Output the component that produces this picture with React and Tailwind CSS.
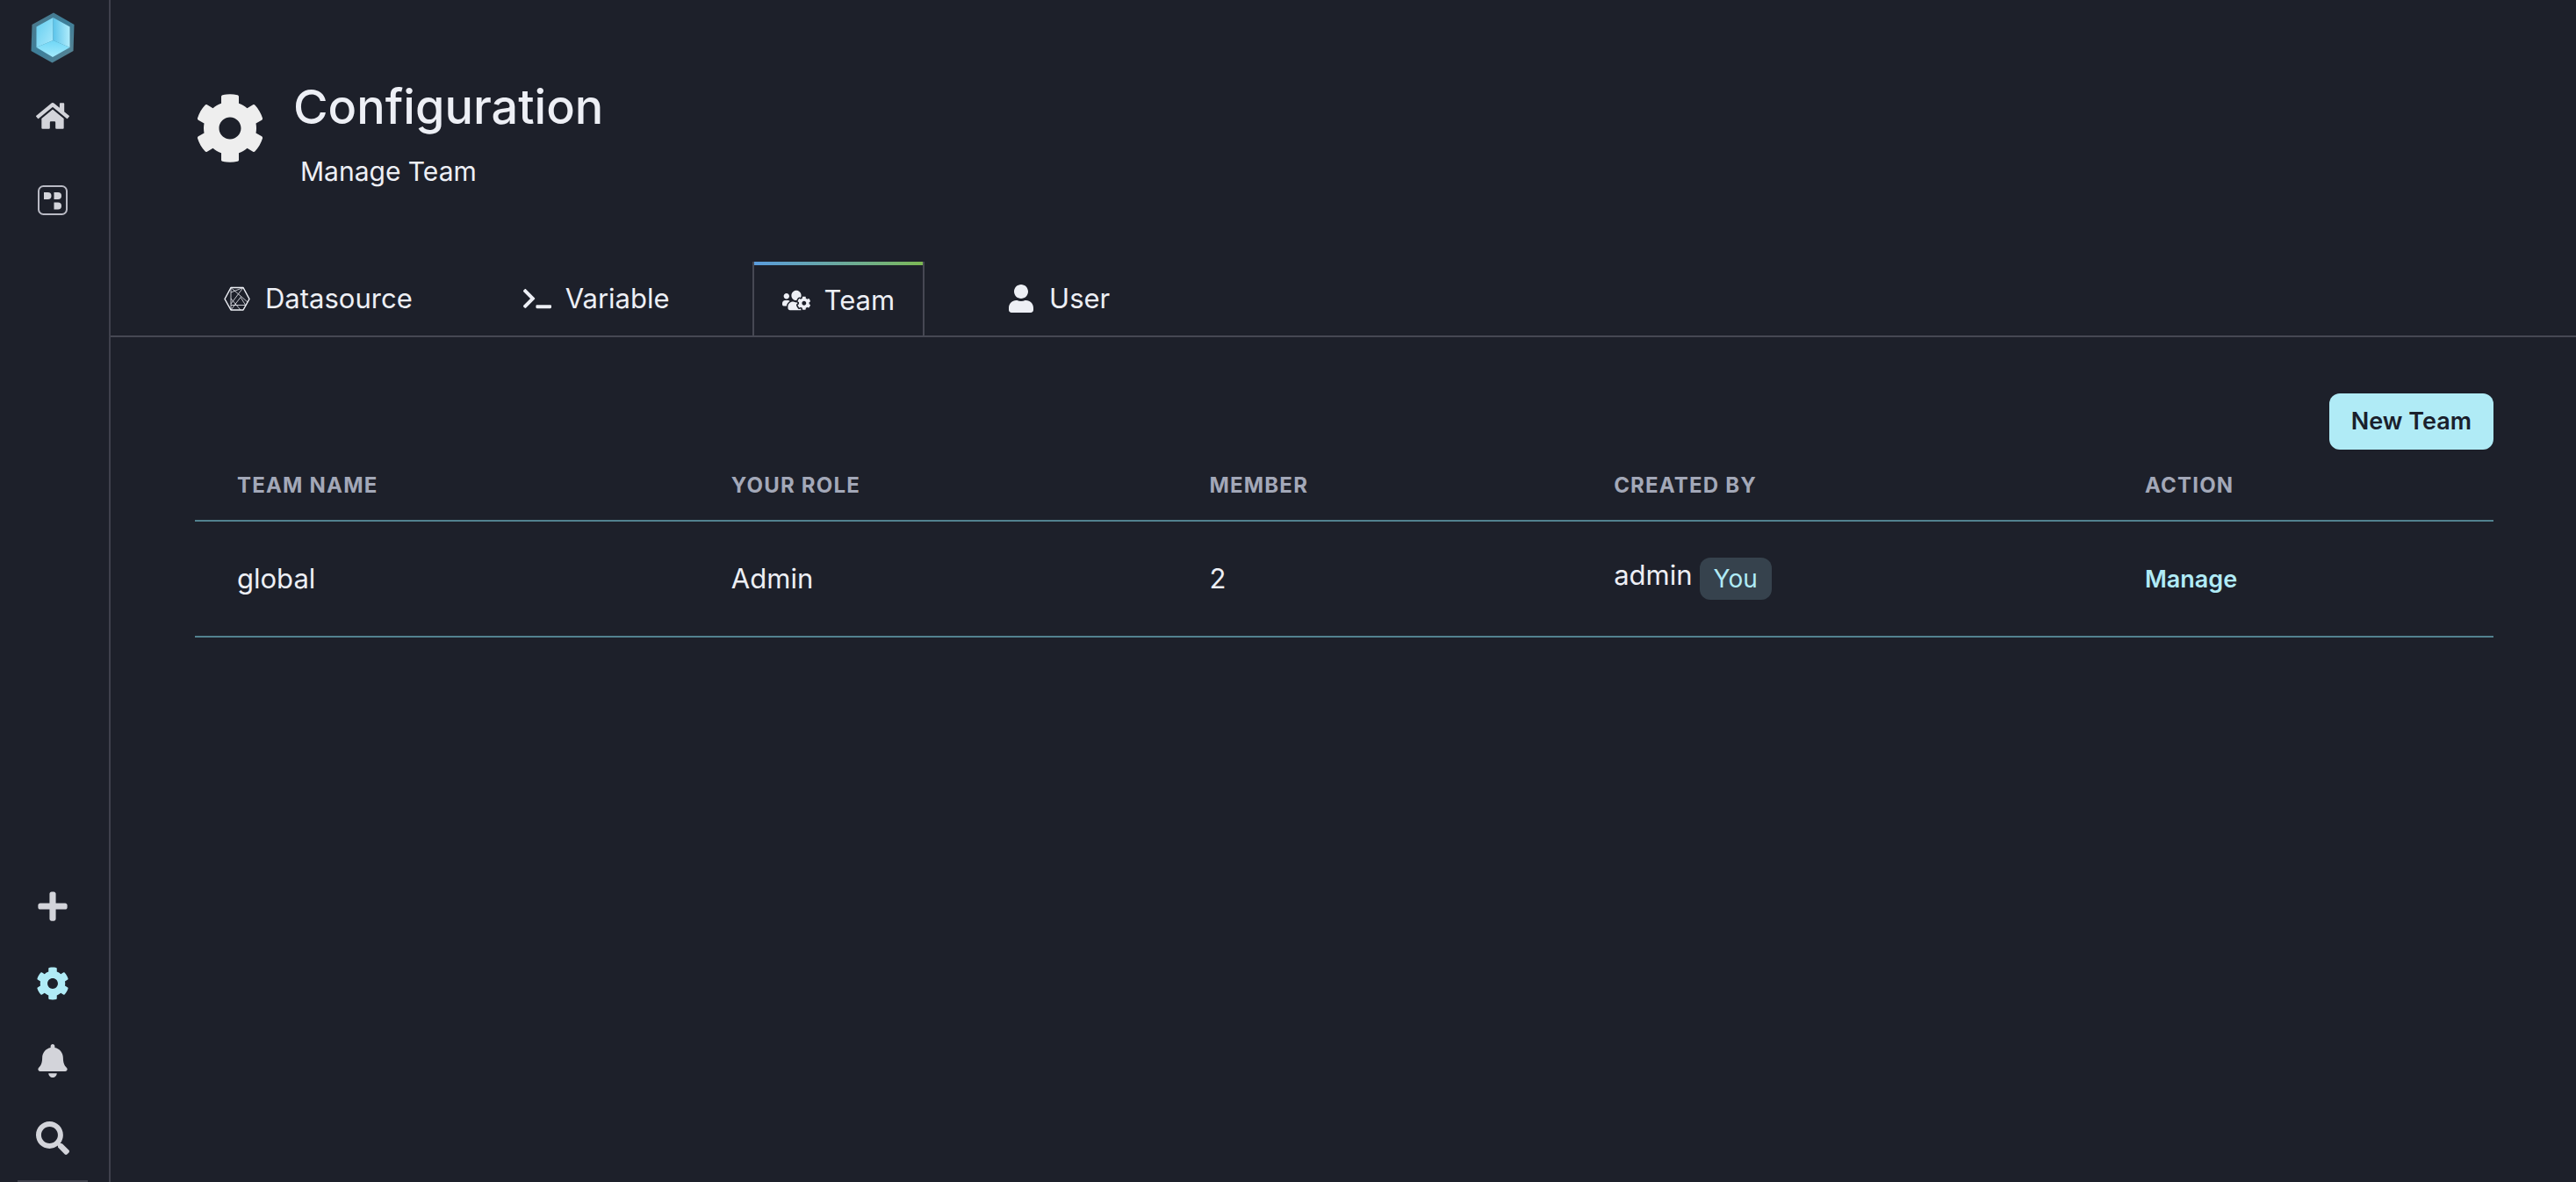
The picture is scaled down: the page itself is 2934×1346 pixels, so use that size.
import React from "react";
import { FaHome, FaPlus, FaCog, FaBell, FaSearch, FaTerminal, FaUsersCog, FaUser } from "react-icons/fa";

function Logo() {
  return (
    <svg viewBox="0 0 50 58" className="h-[58px] w-[50px]" aria-hidden="true">
      <defs>
        <linearGradient id="rim" x1="0" y1="0" x2="1" y2="1">
          <stop offset="0" stopColor="#4f7788" />
          <stop offset="0.5" stopColor="#3d7f9a" />
          <stop offset="1" stopColor="#5d8492" />
        </linearGradient>
        <linearGradient id="left" x1="0" y1="0" x2="1" y2="1">
          <stop offset="0" stopColor="#63cdf0" />
          <stop offset="1" stopColor="#a9e9fb" />
        </linearGradient>
        <linearGradient id="right" x1="0" y1="0" x2="1" y2="0">
          <stop offset="0" stopColor="#5cc4ea" />
          <stop offset="1" stopColor="#b0ecfb" />
        </linearGradient>
        <linearGradient id="base" x1="0" y1="0" x2="0" y2="1">
          <stop offset="0" stopColor="#6fd6f6" />
          <stop offset="1" stopColor="#a3ebfc" />
        </linearGradient>
      </defs>
      <path d="M26 0.500 49.500 14 48.500 44 24.500 57.500 0.500 44 1.500 14Z" fill="url(#rim)" />
      <path d="M25.500 6 6.500 16.500V40L25.500 32Z" fill="url(#left)" />
      <path d="M25.500 6 44.500 16.500V40L25.500 32Z" fill="url(#right)" />
      <path d="M6.500 40 25.500 32 44.500 40 25 51Z" fill="url(#base)" />
    </svg>
  );
}

function Panels() {
  return (
    <svg viewBox="0 0 34 34" className="h-[34px] w-[34px]" aria-hidden="true">
      <rect x="1" y="1" width="32" height="32" rx="5.500" fill="none" stroke="#b9bac4" strokeWidth="2" />
      <g fill="currentColor">
        <path d="M7 8h4.500a4 4 0 0 1 0 8H7Z" />
        <path d="M18.500 8H23a4 4 0 0 1 0 8h-4.500Z" />
        <path d="M18.500 19.500H23a4 4 0 0 1 0 8h-4.500Z" />
      </g>
    </svg>
  );
}

function Mesh() {
  return (
    <svg viewBox="0 0 32 32" className="size-8" fill="none" stroke="currentColor" aria-hidden="true">
      <path d="M9 3.500H23L30 16.500 23 29H9L2 16.500Z" strokeWidth="1.500" strokeLinejoin="round" />
      <path d="M9 3.500V29M9 9 23 3.500M9 3.500 28 20M23 3.500 9 22M9 29 20 14.500 26 24M9 16 20 29M9 23.500H25" strokeWidth="0.800" />
    </svg>
  );
}

const tabs = [
  { name: "Datasource", icon: Mesh },
  { name: "Variable", icon: FaTerminal },
  { name: "Team", icon: FaUsersCog, active: true },
  { name: "User", icon: FaUser },
];

const columns = [
  { label: "Team name", width: "w-[21.5%]" },
  { label: "Your role", width: "w-[20.8%]" },
  { label: "Member", width: "w-[17.6%]" },
  { label: "Created by", width: "w-[23.1%]" },
  { label: "Action", width: "w-[17%]" },
];

function SideButton({ label, className = "text-[#d3d4da]", children }) {
  return (
    <button type="button" aria-label={label} className={`flex size-[38px] items-center justify-center text-[38px] ${className}`}>
      {children}
    </button>
  );
}

function Sidebar() {
  return (
    <aside className="flex w-[126px] shrink-0 flex-col border-r-2 border-[#3f414c] pr-1">
      <nav className="flex grow flex-col items-center pt-3.5" aria-label="Main">
        <a href="#home" aria-label="Start"><Logo /></a>
        <div className="mt-[41px] flex flex-col items-center gap-[58px]">
          <SideButton label="Home"><FaHome /></SideButton>
          <SideButton label="Dashboards"><Panels /></SideButton>
        </div>
      </nav>
      <div className="flex flex-col items-center gap-[50px]">
        <SideButton label="Create"><FaPlus /></SideButton>
        <SideButton label="Configuration" className="text-[#b0ebf6]"><FaCog /></SideButton>
        <SideButton label="Alerts"><FaBell /></SideButton>
        <SideButton label="Search"><FaSearch /></SideButton>
      </div>
      <hr className="mx-5 mt-[29px] border-t-2 border-[#3f414c]" />
    </aside>
  );
}

export default function App() {
  return (
    <div className="flex min-h-screen bg-[#1d202a] font-['Inter',sans-serif] text-[#edeff5]">
      <Sidebar />
      <main className="min-w-0 grow">
        <header className="flex items-start gap-8 px-24 pt-[86px]">
          <FaCog className="mt-5 size-20 shrink-0 text-[#eeeeee]" />
          <div>
            <h1 className="text-[54px] leading-[72px] font-medium">Configuration</h1>
            <p className="mt-3 pl-2 text-[30px] leading-[50px]">Manage Team</p>
          </div>
        </header>

        <nav className="mt-[78px] flex items-end gap-[62px] border-b-2 border-[#464853] px-24" aria-label="Configuration">
          {tabs.map(({ name, icon: Icon, active }) => (
            <a
              key={name}
              href={`#${name.toLowerCase()}`}
              aria-current={active ? "page" : undefined}
              className={active ? "border-x-2 border-[#464853]" : ""}
            >
              {active && <span className="block h-1 bg-linear-to-r from-[#5a9bdc] via-[#6ba99f] to-[#7cb852]" />}
              <span className={`flex items-center gap-4 px-8 text-[31px] leading-10 ${active ? "py-5" : "pt-5 pb-[22px]"}`}>
                <Icon className="size-8" />
                {name}
              </span>
            </a>
          ))}
        </nav>

        <section className="pt-16 pr-[94px] pl-24">
          <div className="flex justify-end">
            <button type="button" className="rounded-xl bg-[#b0ebf6] px-[25px] text-[27px] leading-16 font-semibold text-[#1a202c]">
              New Team
            </button>
          </div>
          <table className="w-full table-fixed border-collapse text-left">
            <thead>
              <tr className="border-b-2 border-[#52828f]">
                {columns.map((c) => (
                  <th key={c.label} scope="col" className={`px-12 pt-[25px] pb-[23px] text-[24px] leading-8 font-bold tracking-wider text-[#a3a8b8] uppercase ${c.width}`}>
                    {c.label}
                  </th>
                ))}
              </tr>
            </thead>
            <tbody>
              <tr className="border-b-2 border-[#52828f] text-[31px] leading-12">
                <td className="px-12 py-10">global</td>
                <td className="px-12 py-10">Admin</td>
                <td className="px-12 py-10">2</td>
                <td className="px-12 py-10">
                  <div className="flex items-center gap-2">
                    <span className="-mt-2">admin</span>
                    <span className="rounded-xl bg-[#36424d] px-4 text-[28px] leading-12 text-[#b0ebf6]">You</span>
                  </div>
                </td>
                <td className="px-12 py-10">
                  <button type="button" className="text-[27px] leading-12 font-semibold text-[#b0ebf6]">Manage</button>
                </td>
              </tr>
            </tbody>
          </table>
        </section>
      </main>
    </div>
  );
}
